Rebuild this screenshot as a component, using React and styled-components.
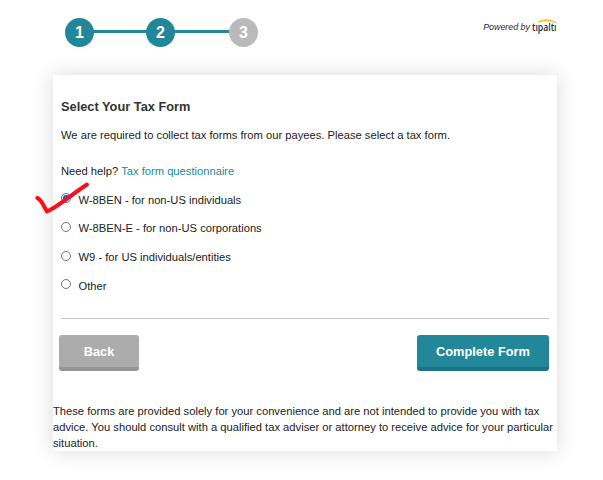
import React, { useState } from 'react'
import styled, { createGlobalStyle } from 'styled-components'

const GlobalStyle = createGlobalStyle`
    * {
        box-sizing: border-box;
    }

    body {
        margin: 0;
        background: #fff;
        font-family: "Liberation Sans", Arial, sans-serif;
        font-size: 11.2px;
        color: #212121;
        overflow: hidden;
    }
`

const Page = styled.div`
    position: relative;
    width: 603px;
    height: 480px;
    padding: 0 46px 0 53px;
    overflow: hidden;
`

const Header = styled.header`
    height: 75px;
    padding: 18px 0 0 12px;
    display: flex;
    justify-content: space-between;
    align-items: flex-start;
`

const Steps = styled.div`
    display: flex;
    align-items: center;
`

const Step = styled.div`
    width: 29px;
    height: 29px;
    border-radius: 50%;
    background: ${props => (props.$done ? '#228799' : '#bababa')};
    color: #fff;
    font-size: 16px;
    font-weight: bold;
    line-height: 29px;
    text-align: center;
`

const StepLine = styled.div`
    width: ${props => props.$width}px;
    height: 3px;
    margin: 0 -1px 2px;
    background: #228799;
`

const PoweredBy = styled.div`
    display: flex;
    align-items: flex-start;
    gap: 2px;
    font-size: 8.9px;
    line-height: 11px;
    font-style: italic;
    color: #1c2b38;
    white-space: nowrap;

    span {
        padding-top: 4px;
    }
`

const Logo = styled.svg`
    display: block;
    width: 25px;
    height: 16px;
    margin-top: 1px;
    overflow: visible;
`

const Card = styled.main`
    width: 504px;
    height: 376px;
    background: #fff;
    box-shadow: 0 0 20px rgba(0, 0, 0, 0.15);
`

const Content = styled.section`
    height: 244px;
    margin: 0 8px;
    padding-top: 24px;
    border-bottom: 1px solid #c4c4c4;
`

const Title = styled.h1`
    margin: 0;
    font-size: 12.8px;
    line-height: 16px;
    font-weight: bold;
    color: #333;
`

const Text = styled.p`
    margin: ${props => props.$top}px 0 0;
    line-height: 16px;
`

const Link = styled.a`
    color: #228799;
    text-decoration: none;
`

const Options = styled.div`
    margin-top: 12.8px;
    display: flex;
    flex-direction: column;
    gap: 12.6px;
`

const Option = styled.label`
    display: flex;
    align-items: flex-start;
    gap: 7.5px;
    height: 16px;
    line-height: 16px;
`

const Radio = styled.input`
    appearance: none;
    flex-shrink: 0;
    width: 10px;
    height: 10px;
    margin: 1.6px 0 0;
    border: 1px solid #777;
    border-radius: 50%;
    background: #fff;

    &:checked {
        border-color: #1a73e8;
        background: radial-gradient(circle, #0b65ee 2.8px, #fff 3.4px);
    }
`

const CheckMark = styled.svg`
    position: absolute;
    top: 178px;
    left: 32px;
    width: 60px;
    height: 40px;
    pointer-events: none;
`

const Actions = styled.div`
    display: flex;
    justify-content: space-between;
    padding: 16px 8px 0 6px;
`

const Button = styled.button`
    width: ${props => props.$width}px;
    height: 36px;
    padding: 1px 0 0;
    border: 0;
    border-bottom: 4px solid ${props => (props.$primary ? '#1d7383' : '#959595')};
    border-radius: 3px;
    background: ${props => (props.$primary ? '#228799' : '#acacac')};
    color: #fff;
    font-family: inherit;
    font-size: 12.8px;
    font-weight: bold;
`

const Disclaimer = styled.p`
    margin: 32px 0 0;
    line-height: 16px;
    white-space: nowrap;
`

const forms = [
    'W-8BEN - for non-US individuals',
    'W-8BEN-E - for non-US corporations',
    'W9 - for US individuals/entities',
    'Other',
]

export default function App() {
    const [selected, setSelected] = useState(forms[0])

    return (
        <Page>
            <GlobalStyle />
            <Header>
                <Steps>
                    <Step $done>1</Step>
                    <StepLine $width={54} />
                    <Step $done>2</Step>
                    <StepLine $width={56} />
                    <Step>3</Step>
                </Steps>
                <PoweredBy>
                    <span>Powered by</span>
                    <Logo viewBox="0 0 25 16">
                        <text x="0" y="11.6" fontFamily="Open Sans, sans-serif" fontSize="10" fontWeight="600" fontStyle="normal" fill="#1c2b38" textLength="24.5" lengthAdjust="spacingAndGlyphs">tıpaltı</text>
                        <path d="M6 3.2 C10.5 0 19 -0.2 24.5 4 C18.5 1.3 12 1.3 6 3.2Z" fill="#fdb924" stroke="#fdb924" strokeWidth="0.8" />
                    </Logo>
                </PoweredBy>
            </Header>

            <Card>
                <Content>
                    <Title>Select Your Tax Form</Title>
                    <Text $top={12}>We are required to collect tax forms from our payees. Please select a tax form.</Text>
                    <Text $top={20}>Need help? <Link>Tax form questionnaire</Link></Text>
                    <Options>
                        {forms.map(form => (
                            <Option key={form}>
                                <Radio
                                    type="radio"
                                    name="form"
                                    checked={selected === form}
                                    onChange={() => setSelected(form)}
                                />
                                <span>{form}</span>
                            </Option>
                        ))}
                    </Options>
                </Content>
                <Actions>
                    <Button $width={80}>Back</Button>
                    <Button $width={132} $primary>Complete Form</Button>
                </Actions>
                <Disclaimer>
                    These forms are provided solely for your convenience and are not intended to provide you with tax<br />
                    advice. You should consult with a qualified tax adviser or attorney to receive advice for your particular<br />
                    situation.
                </Disclaimer>
            </Card>

            <CheckMark viewBox="0 0 60 40">
                <path d="M5.3 20 C9.5 21.5 11.500 28 15 33.5 C26 29 36 19 55 6.500" fill="none" stroke="#fb0d1b" strokeWidth="4" strokeLinecap="round" strokeLinejoin="round" />
            </CheckMark>
        </Page>
    )
}
